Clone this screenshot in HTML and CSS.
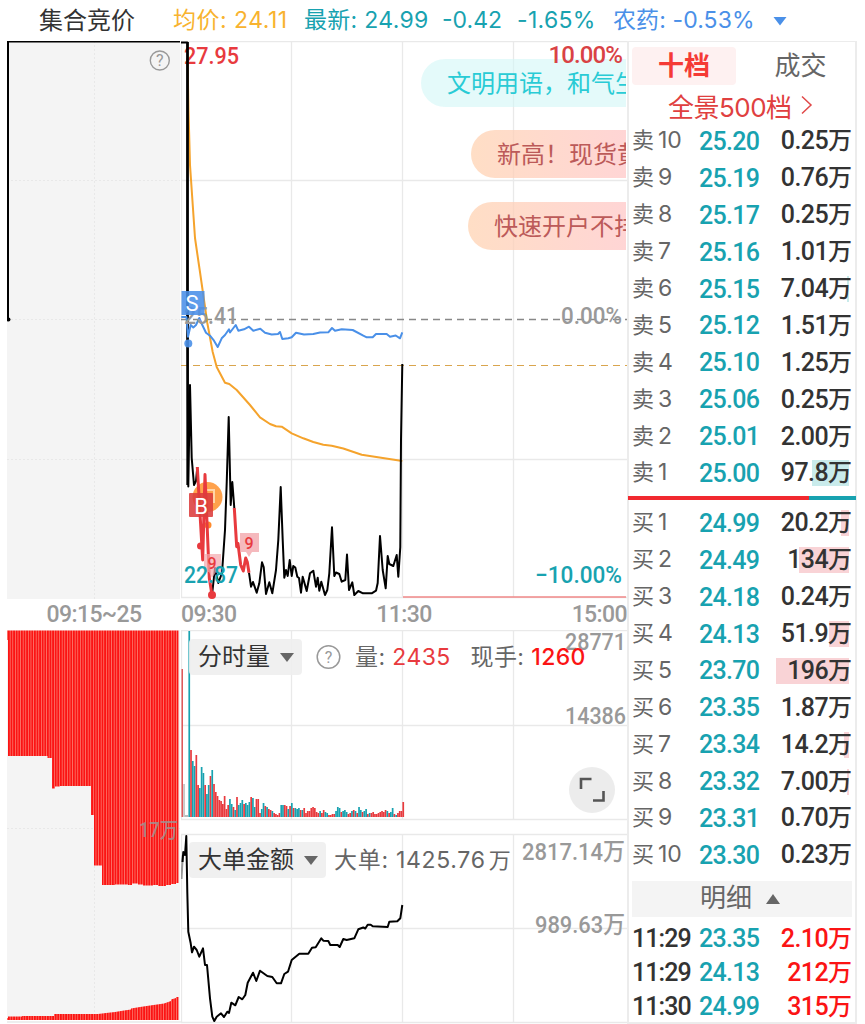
FILE: index.html
```html
<!DOCTYPE html>
<html lang="zh-CN">

<head>
    <meta charset="UTF-8">
    <meta name="viewport" content="width=device-width, initial-scale=1.0">
    <title>分时</title>
    <link rel="stylesheet" href="styles.css">
</head>

<body>
    <div class="top">
        <span class="top-title">集合竞价</span>
        <span class="avg">均价: 24.11</span>
        <span class="last">最新: 24.99</span>
        <span class="chg">-0.42</span>
        <span class="pct">-1.65%</span>
        <span class="sector">农药: -0.53%</span>
        <svg class="arrow" width="14" height="10" viewBox="0 0 14 10"><path d="M.5 1h13L7 9.500z" fill="#4a90e8"/></svg>
    </div>

    <div class="main">
        <!-- call auction -->
        <div class="auction">
            <svg width="174" height="558" viewBox="7 41 174 558">
                <rect x="7" y="41" width="173" height="558" fill="#f4f4f4"/>
                <path class="dots" d="M94.5 41V599M7 180.500H180M7 319.500H180M7 459.500H180"/>
                <path d="M8 320V41.500H180" fill="none" stroke="#000" stroke-width="2"/>
                <circle cx="8.500" cy="319.500" r="2"/>
                <circle cx="159.800" cy="60.500" r="9.500" fill="none" stroke="#999" stroke-width="1.400"/>
                <text x="159.800" y="66" class="q">?</text>
            </svg>
            <div class="axis axis-mid">09:15~25</div>
            <svg width="174" height="394" viewBox="7 630 174 394">
                <defs>
                    <pattern id="stripe" x="8" y="0" width="2.600" height="10" patternUnits="userSpaceOnUse">
                        <rect width="2.600" height="10" fill="#fb8a7c"/>
                        <rect width="1.900" height="10" fill="#fb1414"/>
                    </pattern>
                </defs>
                <rect x="7" y="630" width="173" height="390" fill="#f4f4f4"/>
                <path class="dots" d="M94.500 630V1020M7 828.500H180"/>
                <path fill="url(#stripe)" d="M7 630.500H178.500V883H176V884H171V885H166V886H158V885H153V885.500H143V884.500H138V883.500H132V885H128V884.500H115V885H102V865.500H94V815H91V786H60V786.500H55V788.500H52V758H47.500V756H8V640H7Z"/>
                <path fill="url(#stripe)" d="M7 1020V1018H8V1016.500H22V1016H54V1014H98L106 1013L115 1012L124 1010.500L131 1009.500V1008.500L140 1007L150 1005.500L164 1003.500L171 1001V999.500L176 998V997H178.500V1020Z"/>
                <text x="139" y="837" font-size="21" fill="#999" fill-opacity=".8" textLength="39" lengthAdjust="spacingAndGlyphs">17万</text>
                <path d="M7 1022H181" stroke="#eee" stroke-width="2"/>
            </svg>
        </div>

        <div class="center">
            <div class="panel">
                <svg width="446" height="558" viewBox="181 41 446 558">
                    <path class="grid" d="M181 41.500H627M181.500 41V598M291.500 41V598M402.500 41V598M513.500 41V598M181 180.500H627M181 459.500H627M181 597.500H627"/>
                    <text x="184" y="63.500" class="num" fill="#e83a3e" textLength="55" lengthAdjust="spacingAndGlyphs">27.95</text>
                    <path d="M181 319.500H627" stroke="#888" stroke-width="1.300" stroke-dasharray="7 5"/>
                    <path d="M181 365.500H627" stroke="#d9a54e" stroke-width="1.200" stroke-dasharray="7 5"/>
                    <path d="M403 597H626" stroke="#f08888" stroke-width="1.600"/>
                    <polyline class="line" stroke="#f5a32c" points="187.500,58 188.500,110 190,165 195,238 198.500,262 199.700,270 204.300,302 207.300,323 212.700,352 216.700,367 225,382.700 229.300,384 236.700,390 250,405 260,417.300 270,424 276,426.300 281.700,426.700 291.700,433.300 303.300,438.300 313.300,442 323.300,444.700 331.700,445.700 343.300,448.500 361.700,454.700 402.300,461"/>
                    <polyline class="line" stroke="#000" points="181,42.500 187.300,42.500 187.300,300 188.300,486.500 190,385 191.700,458 194,485 196,481 197.300,467"/>
                    <path d="M187.600 42V485" stroke="#000" stroke-width="2.500"/>
                    <circle cx="207.500" cy="497" r="15" fill="#ff9838" fill-opacity=".9"/>
                    <path d="M207 490h7v13" fill="none" stroke="#ffd5aa" stroke-width="2"/>
                    <circle cx="208" cy="525" r="3.500" fill="#ff8a2c"/>
                    <polyline class="line" stroke="#000" points="212,595 215,568 218.300,583 222,573 225,530 226.700,483 228.700,417 230.700,505 232.300,482 234.300,508"/>
                    <polyline class="line" stroke="#000" points="249,572.700 251,586.700 253,582 256.700,592.700 259.300,583.300 262,562.300 263.700,567 266,594 269.300,582.300 272.300,593.300 276,570 278.300,540 280.700,487 282.700,540 284.300,577.700 286,570 287.700,576 289.700,560 291.700,576 293.300,566 295.300,567.500 297.300,576.700 299,578 301,592.700 302.700,576.700 306.700,591 310,573.300 313.300,570.700 316,586.700 317.700,577.700 319.300,590.700 321.300,581.700 325,595 327.300,590 329.300,573.300 332,527.300 334.300,576 336,572.500 339.300,574 341.700,581.700 345.300,580 347,554.500 349,590 352.300,582.300 354.300,595 358.300,591 363,593.300 371.700,593.300 376,590.700 377.700,583 380,536 382.700,570 385.700,588.300 387.700,556 389.300,564 393.300,566 396.700,555 398.300,576.700 400.300,547 401,440 402.300,364"/>
                    <polyline class="line bold" points="197.300,467 202.700,560 205,474.500 209.300,578 212,595"/>
                    <polyline class="line bold" points="234.300,508 236.700,546.700 238,543.500 240.700,565 243.300,571 245.700,558 247.300,562 249,572.700"/>
                    <circle cx="200.500" cy="546" r="3.500" fill="#e83a3e"/>
                    <circle cx="212" cy="595" r="4" fill="#e83a3e"/>
                    <polyline class="line" stroke="#4a90e8" points="181.300,317 186.500,317 188,336.700 190.700,325 193.300,327.500 196,325 199.300,318 202.300,325 206,332.700 210,335.700 214,340.700 217.700,347 221.700,338.300 225,335 229,329.300 230,332.500 235.700,325 238.300,330.700 244,329.300 249,326.700 253.300,330.700 260.300,328.700 265,332.700 271.700,334.500 278,334 280,332 282.300,339 288.300,338.300 291.700,337.300 296,332.700 304,334.500 313.300,334 320,332.500 328.300,332.300 332,328 335,330.700 341.700,329.300 352.700,330 363.300,335.700 366.700,337.300 372.700,337.300 376,334 386.700,334 390,336.700 395.700,335.500 400,338.300 402.300,332.300"/>
                    <circle cx="188.300" cy="343.500" r="4" fill="#4a90e8" fill-opacity=".9"/>
                    <text x="184" y="323.500" class="num" fill="#999" textLength="54" lengthAdjust="spacingAndGlyphs">25.41</text>
                    <text x="561" y="323.500" class="num" fill="#999" textLength="61" lengthAdjust="spacingAndGlyphs">0.00%</text>
                    <rect x="181.500" y="291" width="23" height="24" fill="#4a90e8" fill-opacity=".88"/>
                    <text x="192" y="311" class="mark">S</text>
                    <rect x="189" y="493" width="24" height="24" rx="1" fill="#dc3c3c" fill-opacity=".88"/>
                    <text x="201" y="513.500" class="mark">B</text>
                    <path d="M240 533h19v19h-7l-3 5-3-5h-6z" fill="#f3a8ac" fill-opacity=".8"/>
                    <text x="249" y="549" class="nine">9</text>
                    <path d="M204 554h17v18h-5l-4 6-3-6h-5z" fill="#f3a8ac" fill-opacity=".7"/>
                    <text x="212" y="569" class="nine">9</text>
                    <text x="184" y="583" class="num" fill="#18a2b0" textLength="54" lengthAdjust="spacingAndGlyphs">22.87</text>
                    <text x="535" y="583" class="num" fill="#18a2b0" textLength="87" lengthAdjust="spacingAndGlyphs">−10.00%</text>
                </svg>
                <div class="tip tip-cyan">文明用语，和气生</div>
                <div class="tip tip-gold">新高！现货黄</div>
                <div class="tip tip-open">快速开户不排</div>
                <div class="limit">10.00%</div>
            </div>
            <div class="axis axis-time"><span>09:30</span><span>11:30</span><span>15:00</span></div>
            <div class="panel volume">
                <svg width="446" height="192" viewBox="181 630 446 192">
                    <path class="grid" d="M181 630.500H627M181.500 630V820M291.500 630V820M402.500 630V820M513.500 630V820M181 725.500H627M181 819.500H627"/>
                    <g id="bars"></g>
                    <text x="565" y="650" class="num" fill="#999" textLength="61" lengthAdjust="spacingAndGlyphs">28771</text>
                    <text x="565" y="723.500" class="num" fill="#999" textLength="61" lengthAdjust="spacingAndGlyphs">14386</text>
                    <circle cx="328.500" cy="657" r="11.300" fill="none" stroke="#999" stroke-width="1.500"/>
                    <text x="328.500" y="663" class="q">?</text>
                    <circle cx="592" cy="790" r="23" fill="#ececec"/>
                    <path d="M581 789v-10h10.500M593 800.500h10.500v-9.500" fill="none" stroke="#555" stroke-width="2.600"/>
                </svg>
                <div class="picker">分时量<i></i></div>
                <div class="legend"><span>量:</span> <b>2435</b> <span class="hand">现手:</span> <strong>1260</strong></div>
            </div>
            <div class="panel money">
                <svg width="446" height="191" viewBox="181 833 446 191">
                    <path class="grid" d="M181 834.500H627M181.500 834V1022M291.500 834V1022M402.500 834V1022M513.500 834V1022M181 928.500H627M181 1022.500H627"/>
                    <text x="522" y="860" class="num" fill="#999" textLength="103" lengthAdjust="spacingAndGlyphs">2817.14万</text>
                    <text x="535" y="933" class="num" fill="#999" textLength="90" lengthAdjust="spacingAndGlyphs">989.63万</text>
                    <path d="M181.500 879L182.800 855" stroke="#999" stroke-width="2"/>
                    <polyline class="line" stroke="#000" points="182.500,862 183.300,852 185,855 186.300,836 187.300,892 188.300,931.700 190.700,943.300 192,952.300 194,946.700 196.700,950 199.300,956.700 203,948.300 205,965 207,965 210,998.300 212.300,1016.700 214.300,1021 216.700,1016.700 221,1013.300 224,1017 227.300,1011.700 229,1013 231.300,1002.700 235.300,1005.300 238.700,997 242.300,999.300 245.300,995 247.700,982.700 253,972.700 256.300,981 260,970.700 267.300,976 272.300,977 276.700,983.300 281,983.300 284.300,974 288,971.700 291.700,960 299.300,953.700 308.300,953.700 312,947.700 315.700,947.300 321.300,938.300 323.300,940.700 328.300,941 330.300,945 337.700,945 339.700,947 343.300,939 346.700,940 354.300,938.300 358.300,929.300 363.300,927.500 365.300,928.500 367.700,924.700 370.700,924.700 372.700,926.300 387.700,927 389.300,921.700 397.300,921.300 400.300,918.300 402.300,905"/>
                </svg>
                <div class="picker">大单金额<i></i></div>
                <div class="legend">大单: 1425.76<small>万</small></div>
            </div>
        </div>

        <!-- order book -->
        <div class="book">
            <div class="tabs"><span class="active">十档</span><span>成交</span></div>
            <div class="all">全景500档<svg width="14" height="20" viewBox="0 0 14 20"><path d="M2 1.500l9 8.500-9 8.500" fill="none" stroke="#e04848" stroke-width="1.500"/></svg></div>
            <div class="rows">
                <div class="row"><span>卖<em>10</em></span><b>25.20</b><strong>0.25<i>万</i></strong></div>
                <div class="row"><span>卖<em>9</em></span><b>25.19</b><strong>0.76<i>万</i></strong></div>
                <div class="row"><span>卖<em>8</em></span><b>25.17</b><strong>0.25<i>万</i></strong></div>
                <div class="row"><span>卖<em>7</em></span><b>25.16</b><strong>1.01<i>万</i></strong></div>
                <div class="row"><span>卖<em>6</em></span><b>25.15</b><strong class="sell" style="--w: 2px">7.04<i>万</i></strong></div>
                <div class="row"><span>卖<em>5</em></span><b>25.12</b><strong>1.51<i>万</i></strong></div>
                <div class="row"><span>卖<em>4</em></span><b>25.10</b><strong>1.25<i>万</i></strong></div>
                <div class="row"><span>卖<em>3</em></span><b>25.06</b><strong>0.25<i>万</i></strong></div>
                <div class="row"><span>卖<em>2</em></span><b>25.01</b><strong>2.00<i>万</i></strong></div>
                <div class="row"><span>卖<em>1</em></span><b>25.00</b><strong class="sell" style="--w: 37px">97.8<i>万</i></strong></div>
            </div>
            <div class="ratio"></div>
            <div class="rows">
                <div class="row"><span>买<em>1</em></span><b>24.99</b><strong class="buy" style="--w: 8px">20.2<i>万</i></strong></div>
                <div class="row"><span>买<em>2</em></span><b>24.49</b><strong class="buy" style="--w: 50px">134<i>万</i></strong></div>
                <div class="row"><span>买<em>3</em></span><b>24.18</b><strong>0.24<i>万</i></strong></div>
                <div class="row"><span>买<em>4</em></span><b>24.13</b><strong class="buy" style="--w: 20px">51.9<i>万</i></strong></div>
                <div class="row"><span>买<em>5</em></span><b>23.70</b><strong class="buy" style="--w: 73px">196<i>万</i></strong></div>
                <div class="row"><span>买<em>6</em></span><b>23.35</b><strong>1.87<i>万</i></strong></div>
                <div class="row"><span>买<em>7</em></span><b>23.34</b><strong class="buy" style="--w: 5px">14.2<i>万</i></strong></div>
                <div class="row"><span>买<em>8</em></span><b>23.32</b><strong class="buy" style="--w: 2px">7.00<i>万</i></strong></div>
                <div class="row"><span>买<em>9</em></span><b>23.31</b><strong>0.70<i>万</i></strong></div>
                <div class="row"><span>买<em>10</em></span><b>23.30</b><strong>0.23<i>万</i></strong></div>
            </div>
            <div class="detail-head">明细<i></i></div>
            <div class="trades">
                <div class="row"><span>11:29</span><b>23.35</b><strong>2.10<i>万</i></strong></div>
                <div class="row"><span>11:29</span><b>24.13</b><strong>212<i>万</i></strong></div>
                <div class="row"><span>11:30</span><b>24.99</b><strong>315<i>万</i></strong></div>
            </div>
        </div>
    </div>

    <script src="script.js"></script>
</body>

</html>
```
FILE: styles.css
```css
* {
    margin: 0;
    padding: 0;
    box-sizing: border-box;
}

body {
    width: 865px;
    height: 1024px;
    overflow: hidden;
    background: #fff;
    font-family: Inter, "Noto Sans CJK SC", sans-serif;
    color: #333;
}

svg {
    display: block;
}

i, em {
    font-style: normal;
}

.top {
    height: 41px;
    padding-left: 39px;
    display: flex;
    align-items: center;
    font-size: 23px;
    line-height: 41px;
    white-space: nowrap;
}

.top span {
    flex: none;
    height: 41px;
}

.top-title {
    width: 134px;
    font-size: 24px;
}

.avg {
    width: 131px;
    color: #f8b32f;
    letter-spacing: .5px;
}

.last {
    width: 138px;
    color: #18a2b0;
    letter-spacing: .3px;
}

.chg {
    width: 75px;
    color: #18a2b0;
}

.pct {
    width: 96px;
    color: #18a2b0;
    letter-spacing: .3px;
}

.sector {
    width: 160px;
    color: #4a90e8;
    letter-spacing: .1px;
}

.main {
    display: flex;
    padding-left: 7px;
}

.auction {
    width: 174px;
}

.center {
    width: 446px;
}

.axis {
    height: 31px;
    line-height: 32px;
    font-family: Roboto, sans-serif;
    font-weight: 500;
    font-size: 23px;
    letter-spacing: -.6px;
    color: #999;
}

.axis-mid {
    text-align: center;
}

.axis-time {
    display: flex;
    justify-content: space-between;
}

.panel {
    position: relative;
    overflow: hidden;
}

.volume {
    height: 203px;
}

.grid {
    fill: none;
    stroke: #e9e9e9;
    stroke-width: 1.3;
}

.dots {
    fill: none;
    stroke: #e8e8e8;
    stroke-dasharray: 2 2;
}

.line {
    fill: none;
    stroke-width: 2;
    stroke-linejoin: round;
}

.bold {
    stroke: #e83a3e;
    stroke-width: 3;
}

svg text {
    font-family: Roboto, "Noto Sans CJK SC", sans-serif;
    font-weight: 500;
}

svg .num {
    font-size: 24px;
}

svg .q {
    font-size: 16px;
    font-weight: 400;
    fill: #999;
    text-anchor: middle;
}

svg .mark {
    font-size: 22px;
    font-weight: 400;
    fill: #fff;
    text-anchor: middle;
}

svg .nine {
    font-size: 16px;
    fill: #e83a3e;
    text-anchor: middle;
}

.tip {
    position: absolute;
    right: 1px;
    height: 48px;
    line-height: 49px;
    border-radius: 24px 0 0 24px;
    padding-left: 26px;
    font-size: 24px;
    white-space: nowrap;
    overflow: hidden;
    color: #bc5a59;
    background: linear-gradient(90deg, rgba(255, 211, 178, .75), rgba(255, 199, 199, .75));
}

.tip-cyan {
    top: 18px;
    width: 205px;
    color: #29cbd5;
    background: rgba(210, 246, 247, .6);
}

.tip-gold {
    top: 89px;
    width: 155px;
}

.tip-open {
    top: 161px;
    width: 158px;
}

.limit {
    position: absolute;
    top: 0;
    right: 5px;
    font: 500 24px/29px Roboto, sans-serif;
    letter-spacing: -.9px;
    color: #d94245;
}

.picker {
    position: absolute;
    left: 8px;
    top: 9px;
    height: 36px;
    padding: 0 8px 0 9px;
    border-radius: 4px;
    display: flex;
    align-items: center;
    font-size: 24px;
    line-height: 34px;
    background: rgba(238, 238, 238, .9);
}

.picker i {
    margin-left: 10px;
    border: 7px solid transparent;
    border-top: 9px solid #666;
    border-bottom: 0;
}

.legend {
    position: absolute;
    left: 174px;
    top: 9px;
    line-height: 36px;
    font-size: 23px;
    letter-spacing: .4px;
    color: #666;
    white-space: nowrap;
}

.legend b, .legend strong {
    font-weight: 400;
    color: #e83a3e;
}

.legend strong {
    font-weight: 500;
    color: #fb1414;
}

.legend small {
    font-size: 22px;
    margin-left: 3px;
}

.hand {
    margin-left: 13px;
}

.money .legend {
    left: 153px;
    letter-spacing: .7px;
}

.book {
    width: 230px;
    height: 983px;
    border: 2px solid #ececec;
    border-top-width: 1px;
    padding: 5px 3px 0;
}

.tabs {
    display: flex;
    height: 38px;
    font-size: 26px;
    line-height: 37px;
    text-align: center;
    color: #666;
}

.tabs span {
    flex: 1;
    padding-left: 13px;
}

.tabs .active {
    flex: none;
    width: 104px;
    padding: 0;
    border-radius: 4px;
    background: #fef1f1;
    color: #f53a35;
    font-weight: 700;
}

.all {
    height: 38px;
    display: flex;
    align-items: center;
    padding: 2px 0 0 36px;
    gap: 8px;
    font-size: 26px;
    letter-spacing: -.5px;
    color: #e04040;
}

.row {
    height: 36.9px;
    display: flex;
    align-items: center;
    white-space: nowrap;
}

.row span {
    width: 67px;
    line-height: 34px;
    height: 36px;
    font-size: 22px;
    color: #666;
}

.row em {
    margin-left: 4px;
    font-size: 23px;
}

.row b {
    font: 500 25px Roboto, sans-serif;
    letter-spacing: -.7px;
    width: 70px;
    color: #18a2b0;
}

.row strong {
    position: relative;
    z-index: 0;
    flex: 1;
    text-align: right;
    font: 500 25px/30px Roboto, "Noto Sans CJK SC", sans-serif;
    letter-spacing: -.6px;
}

.row strong i {
    font-size: 24px;
    letter-spacing: 0;
}

.buy::before, .sell::before {
    content: "";
    position: absolute;
    z-index: -1;
    right: 3px;
    top: 2px;
    width: var(--w);
    height: 26px;
    background: #f9d3d6;
}

.sell::before {
    background: #c9ebeb;
}

.ratio {
    height: 4px;
    margin: 4px -4px 5px;
    background: linear-gradient(90deg, #f1292f 79.5%, #18a2b0 79.5%);
}

.detail-head {
    display: flex;
    align-items: center;
    justify-content: center;
    height: 36px;
    margin: 7px 0 5px;
    padding-bottom: 2px;
    font-size: 26px;
    line-height: 34px;
    color: #666;
    background: #f4f4f4;
}

.detail-head i {
    margin: 3px 4px 0 14px;
    border: 7px solid transparent;
    border-bottom: 10px solid #666;
    border-top: 0;
}

.trades .row {
    height: 34px;
}

.trades .row span {
    font: 500 25px/36px Roboto, sans-serif;
    letter-spacing: -.9px;
    color: #333;
}

.trades .row strong {
    color: #fb1414;
}
```
FILE: script.js
```js
// minute volume, r = up, g = down
const volume = "g186 r67 g56 g51 r62 r32 g29 g50 g44 r32 g23 g32 r41 g47 r33 r25 r21 r17 r16 r13 " +
    "r21 r8 r12 g18 g13 r10 g7 r20 g12 g14 g17 r13 g14 g12 g15 r20 g19 g10 r18 r18 r4 g8 g14 r11 g10 " +
    "r8 r7 g6 r4 r3 r2 r4 g12 g12 r12 r11 g8 r11 g14 r9 g9 g8 g9 r7 g7 r9 r4 r6 r6 r9 r10 r9 r5 r4 g6 " +
    "r4 r7 g5 g4 r2 r2 r3 r3 g6 g10 g9 r5 g6 g7 g5 r3 r4 g6 r7 g6 r4 g10 g7 r5 g6 g8 r3 g4 r4 r5 r3 " +
    "r3 r4 r5 r6 r5 r7 g6 r4 g5 g9 r3 g2 r4 r6 r6 r15";

const bars = document.getElementById("bars");
const list = volume.split(" ");
const step = 214 / (list.length - 1);

function addBar(x, h, w, color) {
    const rect = document.createElementNS("http://www.w3.org/2000/svg", "rect");
    rect.setAttribute("x", x);
    rect.setAttribute("y", 817 - h);
    rect.setAttribute("width", w);
    rect.setAttribute("height", h);
    rect.setAttribute("fill", color);
    bars.appendChild(rect);
}

addBar(181.500, 148, 1.500, "#e0585a");
addBar(183.300, 33, 1.500, "#bbb");
addBar(185, 2, 3, "#bbb");
list.forEach((item, i) => {
    addBar(188.400 + i * step, Number(item.slice(1)), 1.700, item[0] == "r" ? "#e83a3e" : "#18a2b0");
});
```
